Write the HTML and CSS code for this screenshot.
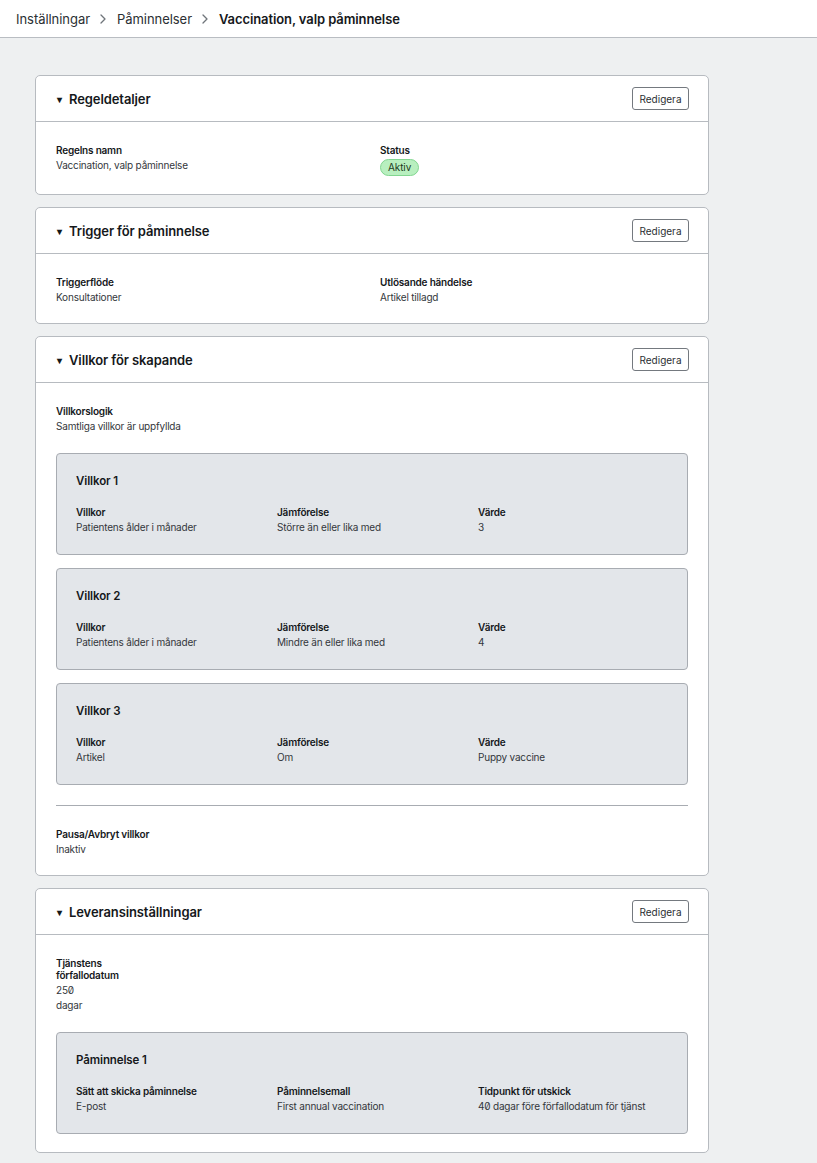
FILE: index.html
```html
<!DOCTYPE html>
<html lang="sv">
<head>
    <meta charset="UTF-8">
    <meta name="viewport" content="width=device-width, initial-scale=1.0">
    <title>Vaccination, valp påminnelse</title>
    <link rel="stylesheet" href="styles.css">
</head>
<body>

    <div class="topbar">
        <nav class="crumbs">
            <a href="#">Inställningar</a>
            <svg class="sep" width="6" height="10" viewBox="0 0 6 10"><path d="M1 1l4 4-4 4" fill="none" stroke="currentColor" stroke-width="1.3" stroke-linecap="round" stroke-linejoin="round"/></svg>
            <a href="#">Påminnelser</a>
            <svg class="sep" width="6" height="10" viewBox="0 0 6 10"><path d="M1 1l4 4-4 4" fill="none" stroke="currentColor" stroke-width="1.3" stroke-linecap="round" stroke-linejoin="round"/></svg>
            <span class="current">Vaccination, valp påminnelse</span>
        </nav>
    </div>

    <div class="main">

        <!-- Regeldetaljer -->
        <section class="card">
            <div class="card-head">
                <h2><span class="caret">&#9662;</span>Regeldetaljer</h2>
                <button class="edit-btn">Redigera</button>
            </div>
            <div class="card-body">
                <div class="cols-2">
                    <div class="field">
                        <div class="label">Regelns namn</div>
                        <div class="value">Vaccination, valp påminnelse</div>
                    </div>
                    <div class="field">
                        <div class="label">Status</div>
                        <span class="badge">Aktiv</span>
                    </div>
                </div>
            </div>
        </section>

        <!-- Trigger -->
        <section class="card">
            <div class="card-head">
                <h2><span class="caret">&#9662;</span>Trigger för påminnelse</h2>
                <button class="edit-btn">Redigera</button>
            </div>
            <div class="card-body">
                <div class="cols-2">
                    <div class="field">
                        <div class="label">Triggerflöde</div>
                        <div class="value">Konsultationer</div>
                    </div>
                    <div class="field">
                        <div class="label">Utlösande händelse</div>
                        <div class="value">Artikel tillagd</div>
                    </div>
                </div>
            </div>
        </section>

        <!-- Villkor -->
        <section class="card">
            <div class="card-head">
                <h2><span class="caret">&#9662;</span>Villkor för skapande</h2>
                <button class="edit-btn">Redigera</button>
            </div>
            <div class="card-body">
                <div class="field">
                    <div class="label">Villkorslogik</div>
                    <div class="value">Samtliga villkor är uppfyllda</div>
                </div>

                <div class="box-list">
                    <div class="box">
                        <h3>Villkor 1</h3>
                        <div class="cols-3">
                            <div class="field">
                                <div class="label">Villkor</div>
                                <div class="value">Patientens ålder i månader</div>
                            </div>
                            <div class="field">
                                <div class="label">Jämförelse</div>
                                <div class="value">Större än eller lika med</div>
                            </div>
                            <div class="field">
                                <div class="label">Värde</div>
                                <div class="value">3</div>
                            </div>
                        </div>
                    </div>
                    <div class="box">
                        <h3>Villkor 2</h3>
                        <div class="cols-3">
                            <div class="field">
                                <div class="label">Villkor</div>
                                <div class="value">Patientens ålder i månader</div>
                            </div>
                            <div class="field">
                                <div class="label">Jämförelse</div>
                                <div class="value">Mindre än eller lika med</div>
                            </div>
                            <div class="field">
                                <div class="label">Värde</div>
                                <div class="value">4</div>
                            </div>
                        </div>
                    </div>
                    <div class="box">
                        <h3>Villkor 3</h3>
                        <div class="cols-3">
                            <div class="field">
                                <div class="label">Villkor</div>
                                <div class="value">Artikel</div>
                            </div>
                            <div class="field">
                                <div class="label">Jämförelse</div>
                                <div class="value">Om</div>
                            </div>
                            <div class="field">
                                <div class="label">Värde</div>
                                <div class="value">Puppy vaccine</div>
                            </div>
                        </div>
                    </div>
                </div>

                <hr class="divider">

                <div class="field">
                    <div class="label">Pausa/Avbryt villkor</div>
                    <div class="value">Inaktiv</div>
                </div>
            </div>
        </section>

        <!-- Leverans -->
        <section class="card">
            <div class="card-head">
                <h2><span class="caret">&#9662;</span>Leveransinställningar</h2>
                <button class="edit-btn">Redigera</button>
            </div>
            <div class="card-body">
                <div class="field narrow">
                    <div class="label">Tjänstens förfallodatum</div>
                    <div class="value">250</div>
                    <div class="value">dagar</div>
                </div>

                <div class="box-list">
                    <div class="box">
                        <h3>Påminnelse 1</h3>
                        <div class="cols-3">
                            <div class="field">
                                <div class="label">Sätt att skicka påminnelse</div>
                                <div class="value">E-post</div>
                            </div>
                            <div class="field">
                                <div class="label">Påminnelsemall</div>
                                <div class="value">First annual vaccination</div>
                            </div>
                            <div class="field">
                                <div class="label">Tidpunkt för utskick</div>
                                <div class="value">40 dagar före förfallodatum för tjänst</div>
                            </div>
                        </div>
                    </div>
                </div>
            </div>
        </section>

    </div>

</body>
</html>
```

FILE: styles.css
```css
* {
    margin: 0;
    padding: 0;
    box-sizing: border-box;
}

body {
    background: #eef0f1;
    font-family: Inter, "Noto Sans", Arial, sans-serif;
    font-variant-numeric: slashed-zero;
    color: #1f2328;
    font-size: 10px;
}

/* top bar with breadcrumbs */
.topbar {
    background: #fff;
    border-bottom: 1px solid #b9bdc2;
    height: 38px;
    display: flex;
    align-items: center;
    padding: 0 16px;
}

.crumbs {
    display: flex;
    align-items: center;
    font-size: 13px;
    letter-spacing: -0.05px;
    color: #2b2f33;
}

.crumbs a {
    color: #2b2f33;
    text-decoration: none;
}

.crumbs .sep {
    color: #6f747a;
    margin: 1px 11px 0 10px;
}

.crumbs .current {
    font-weight: 600;
    color: #15181b;
    letter-spacing: -0.1px;
}

/* cards */
.main {
    width: 709px;
    padding: 37px 0 10px 35px;
    display: flex;
    flex-direction: column;
    gap: 12px;
}

.card {
    background: #fff;
    border: 1px solid #b7bbc0;
    border-radius: 5px;
}

.card-head {
    height: 46px;
    display: flex;
    align-items: center;
    justify-content: space-between;
    padding: 0 19px 0 20px;
    border-bottom: 1px solid #b7bbc0;
}

.card-head h2 {
    display: flex;
    align-items: center;
    font-size: 13px;
    font-weight: 600;
    color: #15181b;
    letter-spacing: -0.1px;
}

.caret {
    font-size: 10px;
    width: 12px;
    margin-left: 1px;
    color: #15181b;
}

.edit-btn {
    font-family: inherit;
    font-size: 10px;
    color: #2b2f33;
    background: #fff;
    border: 1px solid #74797f;
    border-radius: 3px;
    height: 23px;
    width: 57px;
    cursor: pointer;
}

.card-body {
    padding: 22px 20px 18px 20px;
}

.cols-2 {
    display: grid;
    grid-template-columns: 1fr 1fr;
    gap: 16px;
}

.cols-3 {
    display: grid;
    grid-template-columns: 1fr 1fr 1fr;
    gap: 12px;
}

.label {
    font-weight: 600;
    font-size: 10px;
    line-height: 12px;
    letter-spacing: -0.2px;
    color: #15181b;
    margin-bottom: 2px;
}

.value {
    font-size: 10px;
    line-height: 15px;
    letter-spacing: -0.2px;
    color: #33373c;
}

.narrow {
    width: 100px;
}

.badge {
    display: inline-block;
    vertical-align: top;
    font-size: 10px;
    line-height: 15px;
    letter-spacing: -0.1px;
    padding: 0 7px;
    margin-top: 1px;
    background: #b8efbf;
    border: 1px solid #82d690;
    border-radius: 10px;
    color: #1c3a22;
}

/* grey condition boxes */
.box-list {
    display: flex;
    flex-direction: column;
    gap: 13px;
    margin-top: 19px;
}

.box {
    background: #e3e6ea;
    border: 1px solid #a8acb2;
    border-radius: 4px;
    padding: 19px 20px 19px 19px;
}

.box h3 {
    font-size: 11.5px;
    font-weight: 600;
    color: #15181b;
    line-height: 16px;
    letter-spacing: -0.1px;
    margin-bottom: 17px;
}

.divider {
    border: none;
    border-top: 1px solid #a8acb2;
    margin: 20px 0 22px;
}
```
